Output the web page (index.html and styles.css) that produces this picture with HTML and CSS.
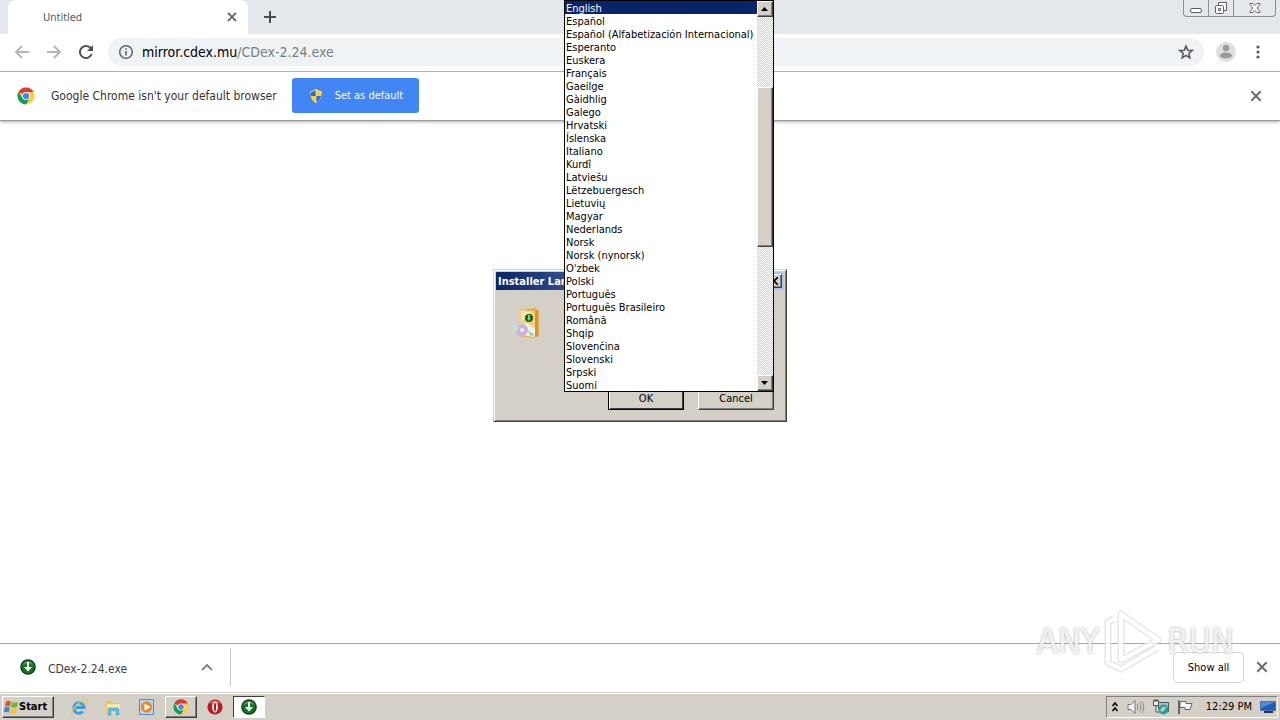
FILE: index.html
```
<!DOCTYPE html>
<html lang="en">
  <head>
    <meta charset="UTF-8">
    <title>Untitled</title>
    <link rel="stylesheet" href="styles.css">
  </head>
  <body>
    <svg class="defs" aria-hidden="true">
      <symbol id="chrome" viewBox="0 0 18 18">
        <circle cx="9" cy="9" r="8.5" fill="#ffcd40"/>
        <path d="M9 9 1.5 5A8.5 8.5 0 0 1 16.6 5H9z" fill="#dd3a30"/>
        <path d="M1.6 4.8A8.5 8.5 0 0 0 9 17.5l3.6-6.4L9 9 5.2 11z" fill="#0f9d58"/>
        <circle cx="9" cy="9" r="4" fill="#f4f4f4"/>
        <circle cx="9" cy="9" r="3.1" fill="#4285f4"/>
      </symbol>
      <symbol id="cdex" viewBox="0 0 16 16">
        <circle cx="8" cy="8" r="7.8" fill="#143f17"/>
        <circle cx="8" cy="8" r="6.3" fill="#177528"/>
        <path d="M2.5 6a5.8 5.8 0 0 1 11 0C10 4 6 4 2.5 6z" fill="#4b9651"/>
        <path d="M7 3h2v5h3l-4 4.500L4 8h3z" fill="#fff"/>
      </symbol>
      <symbol id="close" viewBox="0 0 12 12">
        <path d="m2 2 8 8M10 2l-8 8" stroke="#6a6e73" stroke-width="1.800" fill="none"/>
      </symbol>
    </svg>

    <header>
      <div class="tabstrip">
        <div class="tab">
          <span>Untitled</span>
          <button class="plain" aria-label="Close tab"><svg width="12" height="12"><use href="#close"/></svg></button>
        </div>
        <button class="plain newtab" aria-label="New tab"><svg width="14" height="14" viewBox="0 0 14 14"><path d="M7 1v12M1 7h12" stroke="#4b4f53" stroke-width="2"/></svg></button>
        <div class="winbuttons">
          <button aria-label="Minimize"><svg width="14" height="14" viewBox="0 0 14 14"><rect x="1.500" y="7.500" width="11" height="4" rx="1.500" fill="#fff" stroke="#5c6066"/></svg></button>
          <button aria-label="Restore"><svg width="14" height="14" viewBox="0 0 14 14"><path d="M4.500 4V1.500h8v8H10" fill="#fff" stroke="#5c6066"/><rect x="1.500" y="4.500" width="8" height="8" rx="1" fill="#fff" stroke="#5c6066"/><path d="M4.500 7.500h2v2h-2z" fill="none" stroke="#5c6066"/></svg></button>
          <button aria-label="Close"><svg width="14" height="12" viewBox="0 0 14 12"><path d="M2 1.500h3l2 2 2-2h3v1L9 6l3 3.500v1H9l-2-2-2 2H2v-1L5 6 2 2.500z" fill="#fff" stroke="#5c6066"/></svg></button>
        </div>
      </div>
      <div class="toolbar">
        <button class="plain" aria-label="Back"><svg width="16" height="16" viewBox="0 0 16 16"><path d="M15 8H2M8 2 2 8l6 6" fill="none" stroke="#b4b6b9" stroke-width="2"/></svg></button>
        <button class="plain" aria-label="Forward"><svg width="16" height="16" viewBox="0 0 16 16"><path d="M1 8h13M8 2l6 6-6 6" fill="none" stroke="#b4b6b9" stroke-width="2"/></svg></button>
        <button class="plain" aria-label="Reload"><svg width="16" height="16" viewBox="0 0 16 16"><path d="M13.600 10A6 6 0 1 1 12 3.600L13.500 5" fill="none" stroke="#505459" stroke-width="2"/><path d="M15 1v6H9z" fill="#505459"/></svg></button>
        <div class="omnibox">
          <svg width="16" height="16" viewBox="0 0 16 16"><circle cx="8" cy="8" r="6.300" fill="none" stroke="#5f6368" stroke-width="1.500"/><path d="M8 7v4.500M8 4.200v1.600" stroke="#5f6368" stroke-width="1.600"/></svg>
          <div class="url">mirror.cdex.mu<span>/CDex-2.24.exe</span></div>
          <button class="plain" aria-label="Bookmark"><svg width="16" height="16" viewBox="0 0 16 16"><path d="m8 2 1.700 4.200 4.600.3-3.500 2.900 1.100 4.400L8 11.400l-3.900 2.400 1.100-4.400-3.500-2.900 4.600-.3z" fill="none" stroke="#505459" stroke-width="1.500"/></svg></button>
        </div>
        <button class="plain" aria-label="Profile"><svg width="20" height="20" viewBox="0 0 20 20"><circle cx="10" cy="10" r="10" fill="#dedede"/><circle cx="10" cy="6" r="3.200" fill="#9b9b9b"/><ellipse cx="10" cy="13.500" rx="6" ry="3" fill="#9b9b9b"/></svg></button>
        <button class="plain menu" aria-label="Menu"><svg width="4" height="14" viewBox="0 0 4 14"><g fill="#55595e"><circle cx="2" cy="2" r="1.600"/><circle cx="2" cy="7" r="1.600"/><circle cx="2" cy="12" r="1.600"/></g></svg></button>
      </div>
      <div class="infobar">
        <svg width="18" height="18"><use href="#chrome"/></svg>
        <span>Google Chrome isn't your default browser</span>
        <button class="default">
          <svg width="16" height="16" viewBox="0 0 16 16"><path d="M8 .5C6 2 4 2.500 2 2.500 1.500 8 3 13 8 15.500 13 13 14.500 8 14 2.500 12 2.500 10 2 8 .5z" fill="#e9edf1" stroke="#617998"/><path d="M7.700 2v6H3c-.3-1.500-.3-3 0-4.300C5 3.600 6.500 3 7.700 2zM8.300 8H13c-.7 3-2.300 5-4.700 6.300z" fill="#2c6fca"/><path d="M8.300 2v6H13c.3-1.500.3-3 0-4.300-2-.1-3.500-.7-4.700-1.700zM7.700 8H3c.7 3 2.300 5 4.700 6.300z" fill="#ffcf25"/></svg>
          Set as default
        </button>
        <button class="plain" aria-label="Dismiss"><svg width="14" height="14"><use href="#close"/></svg></button>
      </div>
    </header>

    <main></main>

    <footer>
      <div class="downloads">
        <div class="item">
          <svg width="16" height="16"><use href="#cdex"/></svg>
          <a href="#">CDex-2.24.exe</a>
          <button class="plain" aria-label="Options"><svg width="12" height="8" viewBox="0 0 12 8"><path d="m1 7 5-5 5 5" fill="none" stroke="#7c8085" stroke-width="1.800"/></svg></button>
        </div>
        <button class="showall">Show all</button>
        <button class="plain" aria-label="Close downloads"><svg width="14" height="14"><use href="#close"/></svg></button>
      </div>
      <div class="taskbar">
        <button class="start raised">
          <svg width="16" height="16" viewBox="0 0 16 16"><path d="M3 2.500Q5.500 1 8 2.500L7 7.500Q4.500 6 2 7.500z" fill="#e6512c"/><path d="M9 3q3 1.500 6 0l-1 5q-3 1.500-6 0z" fill="#73b43b"/><path d="M1.700 8.500q2.500-1.500 5 0l-1 5q-2.500-1.500-5 0z" fill="#3d83d5"/><path d="M7.800 9q3 1.500 6 0l-1 5q-3 1.500-6 0z" fill="#f6c52e"/></svg>
          Start
        </button>
        <button class="task" aria-label="Internet Explorer"><svg width="18" height="18" viewBox="0 0 18 18"><path d="M5 9.500h9.200A5.300 5.300 0 1 0 13 13.500" fill="none" stroke="#3d9edb" stroke-width="2.800"/><path d="M2.500 16.500C-.5 14 8 3.500 15 1.500c3-.5 2 3 0 5.500" fill="none" stroke="#e9c34d" stroke-width="1.300"/></svg></button>
        <button class="task" aria-label="Explorer"><svg width="18" height="18" viewBox="0 0 18 18"><path d="M2 3h6l1 2h6v10H2z" fill="#e8c65f"/><path d="M3 6h13v9H3z" fill="#fae89c"/><path d="M4 17v-6q0-1 1-1h9q1 0 1 1v6h-3v-4H7v4z" fill="#66b8dd" stroke="#4a9cc6" stroke-width=".5"/></svg></button>
        <button class="task" aria-label="Media Player"><svg width="18" height="18" viewBox="0 0 18 18"><path d="M1.500 1.500h14v15h-14z" fill="#b6d8f3" stroke="#558cc5"/><circle cx="8.500" cy="9" r="5.700" fill="#f08922"/><path d="m6.500 5.500 6 3.500-6 3.500z" fill="#fff"/></svg></button>
        <button class="task raised" aria-label="Google Chrome"><svg width="16" height="16"><use href="#chrome"/></svg></button>
        <button class="task" aria-label="Opera"><svg width="16" height="16" viewBox="0 0 16 16"><circle cx="8" cy="8" r="7.600" fill="#b91b1e"/><path d="M2 5a7 7 0 0 1 12 0Q8 2 2 5z" fill="#df6666"/><ellipse cx="8" cy="8" rx="2.800" ry="5.500" fill="#fff"/><ellipse cx="8" cy="8" rx="1" ry="4.600" fill="#a81417"/></svg></button>
        <button class="task pressed" aria-label="CDex"><svg width="16" height="16"><use href="#cdex"/></svg></button>
        <div class="tray">
          <svg width="8" height="12" viewBox="0 0 8 12"><path d="m1.500 5 2.500-3 2.500 3M1.500 10 4 7l2.500 3" fill="none" stroke="#000" stroke-width="1.500"/></svg>
          <svg width="18" height="16" viewBox="0 0 18 16"><path d="M1 5.500h3l4-4v13l-4-4H1z" fill="#f5f5f5" stroke="#777"/><path d="M10 5q2 3 0 6M12 3.500q4 4.500 0 9M14.500 2q4.500 6 0 12" fill="none" stroke="#888"/></svg>
          <svg width="16" height="16" viewBox="0 0 16 16"><path d="M5.500 3.500h10v9h-10z" fill="#9fc6ce" stroke="#555"/><path d="M.5 1.500h5v5h-5zM3 7v6h4" fill="#eee" stroke="#555"/><path d="M2 0v3M4 0v3" stroke="#555"/><circle cx="10.500" cy="10.500" r="5" fill="#299c94"/><path d="M7 11q3-5 6-3-1 4-4 5z" fill="#98d8d0"/></svg>
          <svg width="16" height="16" viewBox="0 0 16 16"><path d="M1.500 1v14h1V2M3 2.500h6v2h6l-2 6H8v-2H3z" fill="#f9f9f9" stroke="#666"/></svg>
          <time>12:29 PM</time>
          <svg width="16" height="16" viewBox="0 0 16 16"><path d="M.5 2.500h15v9H.5z" fill="#245bb5" stroke="#4b78b4"/><path d="M1 3h14L1 9z" fill="#4d8bd5"/><path d="M4 12h9v2H4z" fill="#26384f"/></svg>
        </div>
      </div>
    </footer>

    <section class="dialog" role="dialog" aria-label="Installer Language">
      <div class="titlebar"><span>Installer Language</span><button class="raised" aria-label="Close"><svg width="8" height="8" viewBox="0 0 8 8"><path d="m0 0 8 8M8 0 0 8" stroke="#000" stroke-width="1.600"/></svg></button></div>
      <div class="body">
        <svg width="34" height="34" viewBox="0 0 34 34"><path d="m12 4 14-2 4 3v25l-4 2-16-2z" fill="#e8ae46"/><path d="m11 4 15 1v26l-16-2z" fill="#f5cf7c"/><path d="m12 5 10 1-10 10z" fill="#fbe6b1"/><path d="m26 5 3-1v25l-3 2z" fill="#d69432"/><circle cx="20" cy="12" r="4" fill="#155c25"/><path d="M19 9h2v3h1l-2 3-2-3h1z" fill="#75d97b"/><path d="m10 19 7-2 9 5v9l-12-2z" fill="#f5f0ee"/><circle cx="13" cy="24" r="6" fill="#cab4dc"/><circle cx="13" cy="24" r="2" fill="#f6effa"/><path d="m2 17 8 4-2 4-6 1 3-4z" fill="#bde0d3"/><path d="m19 24 7 5-5 1z" fill="#a7cf9c"/></svg>
      </div>
      <div class="actions"><button class="raised ok">OK</button><button class="raised">Cancel</button></div>
    </section>

    <div class="dropdown">
      <select size="30" aria-label="Installer language">
        <option selected>English</option>
        <option>Español</option>
        <option>Español (Alfabetización Internacional)</option>
        <option>Esperanto</option>
        <option>Euskera</option>
        <option>Français</option>
        <option>Gaeilge</option>
        <option>Gàidhlig</option>
        <option>Galego</option>
        <option>Hrvatski</option>
        <option>Íslenska</option>
        <option>Italiano</option>
        <option>Kurdî</option>
        <option>Latviešu</option>
        <option>Lëtzebuergesch</option>
        <option>Lietuvių</option>
        <option>Magyar</option>
        <option>Nederlands</option>
        <option>Norsk</option>
        <option>Norsk (nynorsk)</option>
        <option>O'zbek</option>
        <option>Polski</option>
        <option>Português</option>
        <option>Português Brasileiro</option>
        <option>Română</option>
        <option>Shqip</option>
        <option>Slovenčina</option>
        <option>Slovenski</option>
        <option>Srpski</option>
        <option>Suomi</option>
      </select>
      <div class="scrollbar">
        <button class="raised" aria-label="Scroll up"><svg width="8" height="4" viewBox="0 0 8 4"><path d="M0 4 3.500 0 7 4z"/></svg></button>
        <div class="track"><div class="thumb raised"></div></div>
        <button class="raised" aria-label="Scroll down"><svg width="8" height="4" viewBox="0 0 8 4"><path d="m0 0 3.500 4L7 0z"/></svg></button>
      </div>
    </div>

    <div class="watermark">
      <span>ANY</span>
      <svg width="58" height="64" viewBox="0 0 58 64"><g fill="none" stroke-linejoin="round"><path d="M10 10 4 13v41l13 6 36-21M17 5v46l37-20z" stroke="#e2e2e2" stroke-width="7"/><path d="M10 10 4 13v41l13 6 36-21M17 5v46l37-20z" stroke="#fff" stroke-width="4"/></g></svg>
      <span>RUN</span>
    </div>
  </body>
</html>
```

FILE: styles.css
```
* {
  box-sizing: border-box;
}
body {
  margin: 0;
  min-height: 100vh;
  display: flex;
  flex-direction: column;
  background: #fff;
  color: #000;
  font: 11px "DejaVu Sans Condensed", "DejaVu Sans", sans-serif;
}
button {
  padding: 0;
  font: inherit;
  color: inherit;
}
svg {
  display: block;
  flex: none;
}
.defs {
  position: absolute;
  width: 0;
  height: 0;
}
.plain {
  border: 0;
  background: none;
}

/* Browser */
.tabstrip {
  display: flex;
  height: 34px;
  padding-left: 8px;
  background: #e4e8eb;
}
.tab {
  display: flex;
  align-items: center;
  justify-content: space-between;
  width: 240px;
  padding: 0 10px 0 35px;
  border-radius: 8px 8px 0 0;
  background: #fff;
  color: #54585d;
}
.newtab {
  padding: 0 15px;
}
.winbuttons {
  display: flex;
  height: 17px;
  margin-left: auto;
  margin-right: 4px;
  border: 1px solid #8b9096;
  border-top: 0;
  border-radius: 0 0 4px 4px;
}
.winbuttons button {
  display: grid;
  place-items: center;
  width: 25px;
  border: 0;
  border-right: 1px solid #8b9096;
  background: none;
}
.winbuttons button:last-child {
  width: 41px;
  border: 0;
}
.toolbar {
  display: flex;
  align-items: center;
  gap: 16px;
  height: 38px;
  padding: 0 20px 2px 14px;
  border-bottom: 1px solid #b3b3b3;
}
.omnibox {
  flex: 1;
  display: flex;
  align-items: center;
  gap: 8px;
  height: 28px;
  margin: 0 -4px 0 -2px;
  padding: 0 10px;
  border-radius: 14px;
  background: #f0f3f5;
  font-size: 14px;
}
.omnibox button {
  margin-left: auto;
}
.toolbar .menu {
  margin-left: 4px;
}
.url span {
  color: #7a7f84;
}
.infobar {
  display: flex;
  align-items: center;
  height: 49px;
  padding: 0 17px 1px;
  border-bottom: 1px solid #9a9a9a;
  box-shadow: 0 1px 3px #aaa;
  color: #333;
  font-size: 12px;
}
.infobar span {
  margin-left: 16px;
}
.default {
  display: flex;
  align-items: center;
  gap: 11px;
  height: 35px;
  margin: 0 auto 0 15px;
  padding: 0 16px;
  border: 0;
  border-radius: 3px;
  background: #4285f4;
  color: #fff;
  font-size: 11px;
}
main {
  flex: 1;
}
.downloads {
  display: flex;
  align-items: center;
  height: 49px;
  padding: 0 11px 2px 0;
  border-top: 1px solid #a6a6a6;
}
.item {
  display: flex;
  align-items: center;
  width: 231px;
  height: 38px;
  margin-right: auto;
  padding: 0 17px 0 20px;
  border-right: 1px solid #c8c8c8;
}
.item a {
  flex: 1;
  padding: 3px 0 0 12px;
  color: #3c4043;
  font-size: 12px;
  text-decoration: none;
}
.showall {
  width: 71px;
  height: 31px;
  margin-right: 11px;
  border: 1px solid #d5d7da;
  border-radius: 4px;
  background: #fff;
}

/* Windows classic */
.raised {
  border: 1px solid;
  border-color: #fff #404040 #404040 #fff;
  background: #d4d0c8;
  box-shadow: inset -1px -1px #808080;
}
.taskbar {
  display: flex;
  align-items: center;
  height: 28px;
  padding: 0 2px;
  border-top: 1px solid #d4d0c8;
  background: #d4d0c8;
  box-shadow: inset 0 1px #fff;
}
.start {
  display: flex;
  align-items: center;
  width: 52px;
  height: 22px;
  margin-right: 9px;
  font-weight: bold;
}
.task {
  display: grid;
  place-items: center;
  width: 32px;
  height: 22px;
  margin-right: 2px;
}
.task:not(.raised):not(.pressed) {
  border: 0;
  background: none;
}
.pressed {
  border: 1px solid;
  border-color: #404040 #fff #fff #404040;
  background: #fff;
}
.tray {
  display: flex;
  align-items: center;
  gap: 8px;
  height: 22px;
  margin-left: auto;
  padding: 0 1px 0 4px;
  border: 1px solid;
  border-color: #808080 #fff #fff #808080;
}
.tray time {
  margin-left: 5px;
}
.dialog {
  position: absolute;
  top: 269px;
  left: calc(50% - 147px);
  width: 294px;
  padding: 2px 2px 11px;
  border: 1px solid;
  border-color: #d4d0c8 #404040 #404040 #d4d0c8;
  background: #d4d0c8;
  box-shadow: inset 1px 1px #fff, inset -1px -1px #808080;
}
.titlebar {
  display: flex;
  align-items: center;
  justify-content: space-between;
  height: 18px;
  padding: 0 2px;
  background: linear-gradient(to right, #0a246a, #a6caf0);
  color: #fff;
  font-weight: bold;
}
.titlebar button {
  display: grid;
  place-items: center;
  width: 16px;
  height: 14px;
}
.body {
  height: 97px;
  padding: 16px 13px;
}
.actions {
  display: flex;
  justify-content: flex-end;
  gap: 14px;
  padding-right: 10px;
}
.actions button {
  width: 76px;
  height: 23px;
}
.actions .ok {
  border-color: #000;
  box-shadow: inset 1px 1px #fff, inset -1px -1px #404040;
}
.dropdown {
  position: absolute;
  top: 0;
  left: calc(50% - 76px);
  display: flex;
  width: 210px;
  border: 1px solid #000;
  background: #fff;
}
.dropdown select {
  flex: 1;
  min-width: 0;
  height: 390px;
  padding: 0;
  border: 0;
  border-radius: 0;
  outline: 0;
  overflow: hidden;
  background: #fff;
  color: #000;
  font: inherit;
}
.dropdown option {
  height: 13px;
  min-height: 13px;
  padding: 1px 1px 0;
  line-height: 12px;
}
.dropdown option:checked {
  background: linear-gradient(#0a246a, #0a246a);
  -webkit-text-fill-color: #fff;
}
.scrollbar {
  display: flex;
  flex-direction: column;
  width: 16px;
}
.scrollbar button {
  display: grid;
  place-items: center;
  height: 16px;
}
.track {
  flex: 1;
  padding-top: 70px;
  background: repeating-conic-gradient(#d4d0c8 0 25%, #fff 0 50%) 0 0 / 2px 2px;
}
.thumb {
  height: 160px;
}

.watermark {
  position: absolute;
  right: 46px;
  bottom: 47px;
  display: flex;
  align-items: center;
  gap: 5px;
  color: rgba(255, 255, 255, 0.8);
  font: 34px "DejaVu Sans Condensed", sans-serif;
  text-shadow: 0 0 3px #aaa;
  pointer-events: none;
}
.watermark svg {
  opacity: 0.8;
}
```
